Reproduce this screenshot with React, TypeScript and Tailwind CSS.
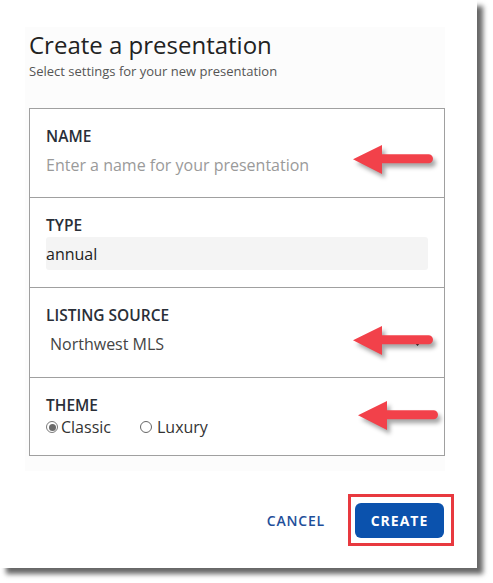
import React from "react";

function Arrow({ className }: { className: string }) {
  return (
    <svg
      className={"absolute drop-shadow-[3px_4px_2px_rgba(0,0,0,0.35)] " + className}
      width="90"
      height="38"
      viewBox="0 0 90 38"
    >
      <path
        d="M2 17.3 L31 3 L31 12.3 L77.5 12.3 A4.5 4.5 0 0 1 77.5 21.3 L31 21.3 L31 32 Z"
        fill="#f2414a"
      />
    </svg>
  );
}

function Label({ children }: { children: React.ReactNode }) {
  return (
    <div className="text-[15.5px] leading-[20px] font-semibold text-[#2a2f38]">{children}</div>
  );
}

export default function App() {
  return (
    <div
      className="w-[493px] h-[583px] bg-white relative overflow-hidden"
      style={{ fontFamily: "'Open Sans', 'Liberation Sans', sans-serif" }}
    >
      <div className="relative w-[477px] h-[568px] bg-white shadow-[6px_6px_5px_rgba(0,0,0,0.6)] pt-[27px] pl-[25px]">
        <div className="w-[420px] h-[444px] bg-[#fcfcfc] pl-[4px] pt-[2px]">
          <h1 className="text-[24px] leading-[32px] text-[#222] font-normal">Create a presentation</h1>
          <p className="text-[13px] leading-[20px] text-[#555]">Select settings for your new presentation</p>

          <div className="mt-[27px] w-[416px] border border-[#a0a0a0] bg-white">
            <div className="px-4 pt-[17px] pb-[16px]">
              <Label>NAME</Label>
              <div className="mt-[2px] h-[33px] flex items-center text-[16px] text-[#9a9a9a]">
                Enter a name for your presentation
              </div>
            </div>
            <div className="border-t border-[#a0a0a0] px-4 pt-[17px] pb-[17px]">
              <Label>TYPE</Label>
              <div className="mt-[2px] h-[33px] flex items-center bg-[#f4f4f4] rounded-[3px] text-[16px] text-[#222]">
                annual
              </div>
            </div>
            <div className="border-t border-[#a0a0a0] px-4 pt-[17px] pb-[17px]">
              <Label>LISTING SOURCE</Label>
              <div className="mt-[2px] h-[33px] flex items-center justify-between pl-[4px] pr-[7px] text-[16px] text-[#444]">
                <span>Northwest MLS</span>
                <svg width="7" height="4" viewBox="0 0 7 4">
                  <path d="M0 0 L7 0 L3.5 4 Z" fill="#333" />
                </svg>
              </div>
            </div>
            <div className="border-t border-[#a0a0a0] px-4 pt-[17px] pb-[16px]">
              <Label>THEME</Label>
              <div className="flex items-center h-[24px] text-[16px] text-[#333]">
                <span className="w-[12px] h-[12px] rounded-full border border-[#7a7a7a] bg-white flex items-center justify-center">
                  <span className="w-[7px] h-[7px] rounded-full bg-[#6b6b6b]" />
                </span>
                <span className="ml-[3px]">Classic</span>
                <span className="ml-[29px] w-[12px] h-[12px] rounded-full border border-[#666] bg-white" />
                <span className="ml-[5px]">Luxury</span>
              </div>
            </div>
          </div>
        </div>

        <div className="mt-[32px] flex items-center justify-end gap-[30px] pr-[33px]">
          <span className="text-[14px] font-semibold tracking-[0.8px] text-[#1f4f9a]">CANCEL</span>
          <div className="relative">
            <div className="w-[89px] h-[35px] rounded-[6px] bg-[#0b52ad] flex items-center justify-center text-[14px] font-bold tracking-[1px] text-white">
              CREATE
            </div>
            <div className="absolute -left-[7px] -top-[9px] w-[106px] h-[52px] border-[3px] border-[#e8393f]" />
          </div>
        </div>

        <Arrow className="left-[351px] top-[142px]" />
        <Arrow className="left-[351px] top-[323px]" />
        <Arrow className="left-[356px] top-[398px]" />
      </div>
    </div>
  );
}
